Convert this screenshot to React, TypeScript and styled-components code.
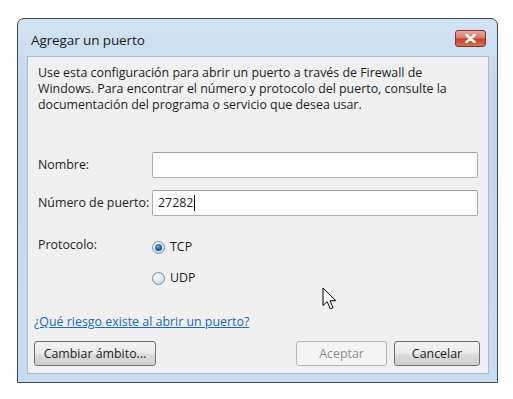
import styled, { createGlobalStyle } from 'styled-components';

const GlobalStyle = createGlobalStyle`
  html, body {
    margin: 0;
    padding: 0;
    background: #ffffff;
  }
  body {
    font-family: "Open Sans", "Noto Sans", sans-serif;
    color: #1e1e1e;
  }
`;

const StyledWindow = styled.div`
  position: relative;
  margin: 18px 0 0 17px;
  width: 481px;
  height: 365px;
  box-sizing: border-box;
  display: flex;
  flex-direction: column;
  border: 1px solid #3a4a5c;
  border-radius: 7px 7px 0 0;
  background: linear-gradient(180deg, #d3e3f2 0%, #c2d7ec 20%, #c7dcf1 100%);
  padding: 0 8px 8px 9px;
`;

const StyledTitleBar = styled.div`
  display: flex;
  align-items: flex-start;
  height: 37px;
  flex-shrink: 0;
`;

const StyledTitle = styled.span`
  font-size: 13.5px;
  color: #1b1b1b;
  margin: 12px 0 0 4px;
  letter-spacing: -0.1px;
`;

const StyledCloseButton = styled.div`
  margin: 11px 3px 0 auto;
  width: 31px;
  height: 17px;
  box-sizing: border-box;
  border: 1px solid #7a3a30;
  border-radius: 3px;
  background: linear-gradient(180deg, #e9a99a 0%, #d77a68 45%, #c2412b 55%, #d9714f 100%);
  display: flex;
  align-items: center;
  justify-content: center;
`;

const StyledPanel = styled.div`
  flex: 1;
  display: flex;
  flex-direction: column;
  background: #f0f0f0;
  border: 1px solid #a9bdd2;
  font-size: 12.4px;
  line-height: 16px;
`;

const StyledDescription = styled.p`
  margin: 8px 11px 0 10px;
`;

const StyledForm = styled.div`
  display: grid;
  grid-template-columns: 114px 326px;
  row-gap: 12px;
  margin: 39px 0 0 10px;
  align-items: center;
`;

const StyledLabel = styled.span<{ $top?: boolean }>`
  align-self: ${(p) => (p.$top ? 'start' : 'center')};
  margin-top: ${(p) => (p.$top ? '9px' : '0')};
`;

const StyledInput = styled.div`
  height: 26px;
  box-sizing: border-box;
  border: 1px solid #abadb3;
  border-top-color: #97a0aa;
  border-radius: 2px;
  background: #ffffff;
  display: flex;
  align-items: center;
  padding-left: 5px;
`;

const StyledCaret = styled.span`
  display: inline-block;
  width: 1px;
  height: 16px;
  background: #000000;
  margin-left: 1px;
`;

const StyledRadioGroup = styled.div`
  display: flex;
  flex-direction: column;
  gap: 13px;
  margin-top: 10px;
`;

const StyledRadioRow = styled.label`
  display: flex;
  align-items: center;
  gap: 5px;
  height: 18px;
`;

const StyledRadio = styled.span<{ $checked?: boolean }>`
  width: 13px;
  height: 13px;
  box-sizing: border-box;
  border-radius: 50%;
  border: 1px solid #7c8fa8;
  background: radial-gradient(circle at 40% 35%, #ffffff 0%, #d7e9f7 50%, #a9cbe6 100%);
  display: flex;
  align-items: center;
  justify-content: center;
  &::after {
    content: '';
    display: ${(p) => (p.$checked ? 'block' : 'none')};
    width: 7px;
    height: 7px;
    border-radius: 50%;
    background: radial-gradient(circle at 40% 35%, #6fa3d8 0%, #1f5a96 60%, #143e6b 100%);
  }
`;

const StyledLink = styled.a`
  margin: auto 0 0 6px;
  color: #1c68b8;
  text-decoration: underline;
`;

const StyledButtonRow = styled.div`
  display: flex;
  gap: 7px;
  margin: 11px 8px 7px 6px;
`;

const StyledButton = styled.button<{ $width: number; $disabled?: boolean }>`
  width: ${(p) => p.$width}px;
  height: 25px;
  box-sizing: border-box;
  font-family: inherit;
  font-size: 12.4px;
  color: ${(p) => (p.$disabled ? '#8d8d8d' : '#1e1e1e')};
  border: 1px solid ${(p) => (p.$disabled ? '#b5b5b5' : '#707070')};
  border-radius: 3px;
  background: ${(p) =>
    p.$disabled
      ? '#f4f4f4'
      : 'linear-gradient(180deg, #f2f2f2 0%, #ebebeb 48%, #dddddd 52%, #cfcfcf 100%)'};
  padding: 0;
`;

const StyledSpacer = styled.div`
  flex: 1;
`;

const StyledPointer = styled.svg`
  position: absolute;
  left: 304px;
  top: 268px;
`;

export default function App() {
  return (
    <>
      <GlobalStyle />
      <StyledWindow>
        <StyledTitleBar>
          <StyledTitle>Agregar un puerto</StyledTitle>
          <StyledCloseButton>
            <svg width="11" height="9" viewBox="0 0 11 9">
              <path d="M1.5 1 L9.5 8 M9.5 1 L1.5 8" stroke="#ffffff" strokeWidth="2.4" strokeLinecap="round" />
            </svg>
          </StyledCloseButton>
        </StyledTitleBar>
        <StyledPanel>
          <StyledDescription>
            Use esta configuración para abrir un puerto a través de Firewall de
            <br />
            Windows. Para encontrar el número y protocolo del puerto, consulte la
            <br />
            documentación del programa o servicio que desea usar.
          </StyledDescription>
          <StyledForm>
            <StyledLabel>Nombre:</StyledLabel>
            <StyledInput />
            <StyledLabel>Número de puerto:</StyledLabel>
            <StyledInput>
              27282
              <StyledCaret />
            </StyledInput>
            <StyledLabel $top>Protocolo:</StyledLabel>
            <StyledRadioGroup>
              <StyledRadioRow>
                <StyledRadio $checked />
                TCP
              </StyledRadioRow>
              <StyledRadioRow>
                <StyledRadio />
                UDP
              </StyledRadioRow>
            </StyledRadioGroup>
          </StyledForm>
          <StyledLink href="#">¿Qué riesgo existe al abrir un puerto?</StyledLink>
          <StyledButtonRow>
            <StyledButton $width={122}>Cambiar ámbito...</StyledButton>
            <StyledSpacer />
            <StyledButton $width={91} $disabled>
              Aceptar
            </StyledButton>
            <StyledButton $width={86}>Cancelar</StyledButton>
          </StyledButtonRow>
        </StyledPanel>
        <StyledPointer width="16" height="24" viewBox="0 0 16 24">
          <path
            d="M1 1 L1 18.5 L5.2 14.6 L8.3 21.8 L11 20.7 L8 13.7 L13.8 13.7 Z"
            fill="#ffffff"
            stroke="#000000"
            strokeWidth="1"
            strokeLinejoin="round"
          />
        </StyledPointer>
      </StyledWindow>
    </>
  );
}
